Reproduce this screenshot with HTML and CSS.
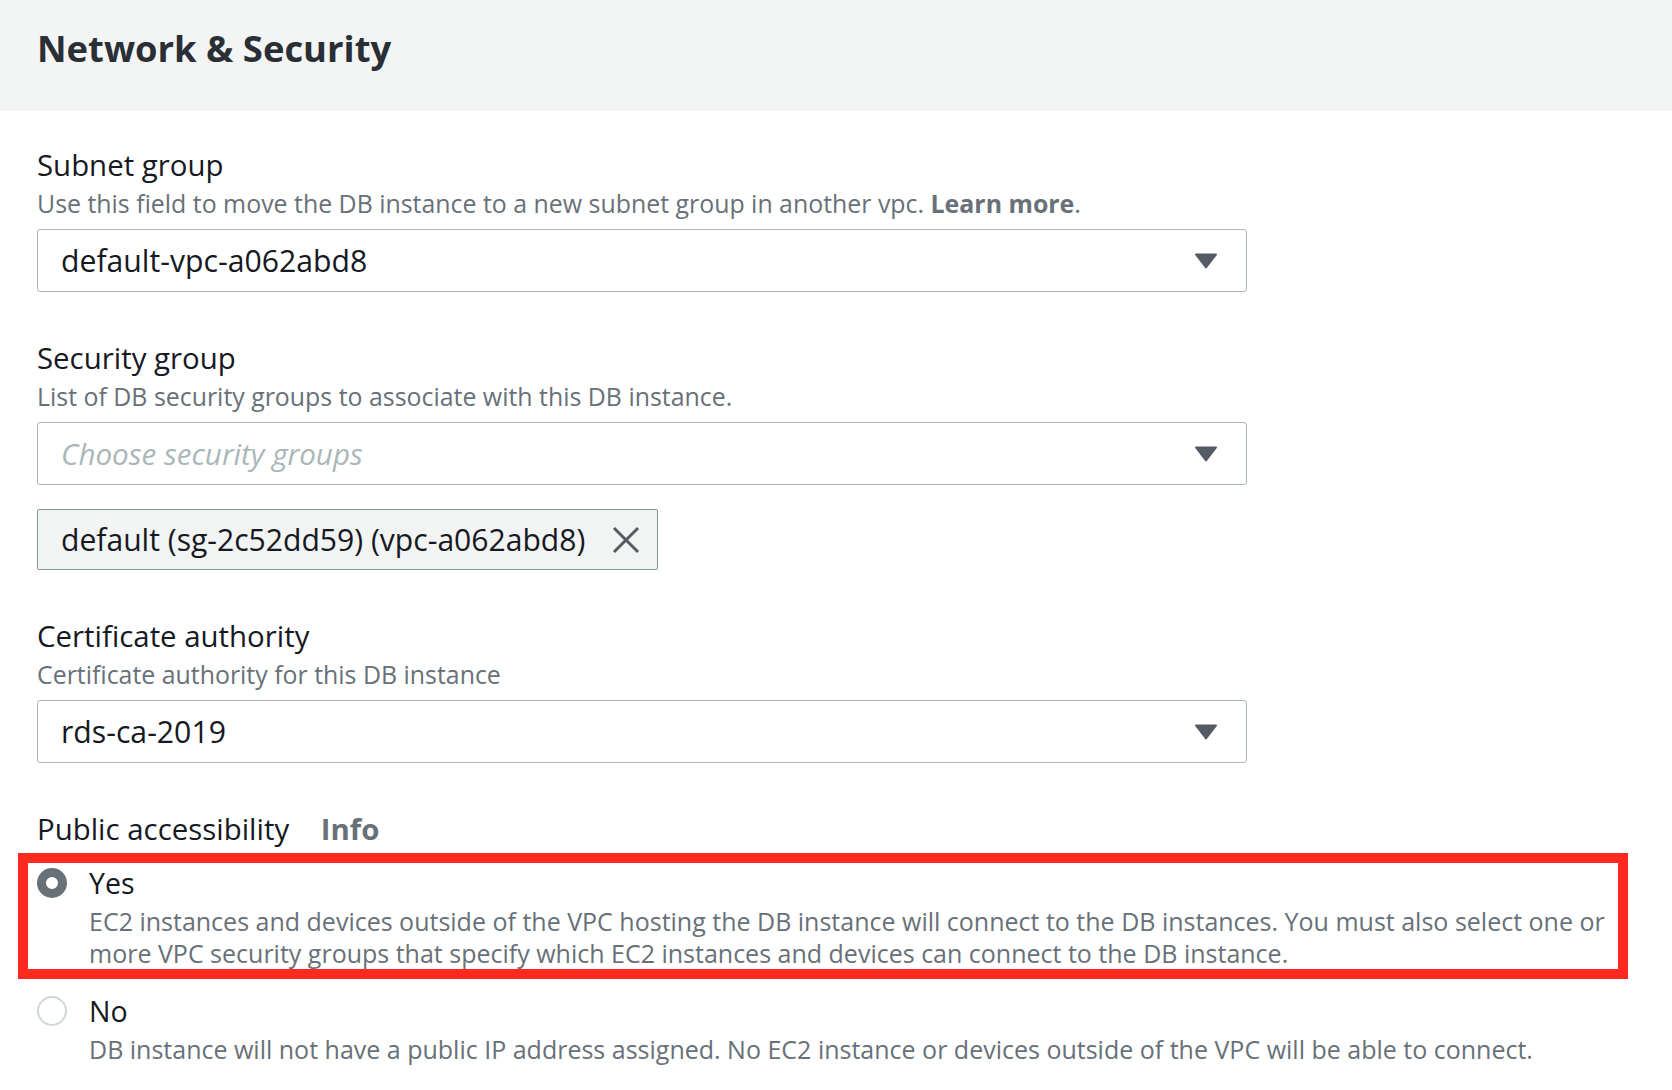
FILE: index.html
```html
<!DOCTYPE html>
<html lang="en">
<head>
<meta charset="utf-8">
<title>Network &amp; Security</title>
<link rel="stylesheet" href="styles.css">
</head>
<body>
<div class="panel">
  <header class="panel-header">
    <h2 class="panel-title">Network &amp; Security</h2>
  </header>
  <div class="panel-body">
    <div class="field">
      <div class="label">Subnet group</div>
      <div class="desc">Use this field to move the DB instance to a new subnet group in another vpc. <b class="link">Learn more</b>.</div>
      <div class="select">
        <span class="value">default-vpc-a062abd8</span>
        <svg class="caret" width="24" height="16" viewBox="0 0 24 16"><polygon points="2,1.5 22,1.5 12,14.5" fill="#545b64" stroke="#545b64" stroke-width="2" stroke-linejoin="round"/></svg>
      </div>
    </div>

    <div class="field">
      <div class="label">Security group</div>
      <div class="desc">List of DB security groups to associate with this DB instance.</div>
      <div class="select">
        <span class="value placeholder">Choose security groups</span>
        <svg class="caret" width="24" height="16" viewBox="0 0 24 16"><polygon points="2,1.5 22,1.5 12,14.5" fill="#545b64" stroke="#545b64" stroke-width="2" stroke-linejoin="round"/></svg>
      </div>
      <div class="token">
        <span class="token-text">default (sg-2c52dd59) (vpc-a062abd8)</span>
        <svg class="token-close" width="28" height="28" viewBox="0 0 28 28"><path d="M2 2 L26 26 M26 2 L2 26" stroke="#545b64" stroke-width="3" fill="none"/></svg>
      </div>
    </div>

    <div class="field">
      <div class="label">Certificate authority</div>
      <div class="desc">Certificate authority for this DB instance</div>
      <div class="select">
        <span class="value">rds-ca-2019</span>
        <svg class="caret" width="24" height="16" viewBox="0 0 24 16"><polygon points="2,1.5 22,1.5 12,14.5" fill="#545b64" stroke="#545b64" stroke-width="2" stroke-linejoin="round"/></svg>
      </div>
    </div>

    <div class="field">
      <div class="label">Public accessibility <span class="info">Info</span></div>
      <div class="radio-group">
        <div class="option highlight">
          <div class="option-row">
            <span class="radio checked"></span>
            <span class="option-label">Yes</span>
          </div>
          <div class="option-desc">EC2 instances and devices outside of the VPC hosting the DB instance will connect to the DB instances. You must also select one or<br>more VPC security groups that specify which EC2 instances and devices can connect to the DB instance.</div>
        </div>
        <div class="option">
          <div class="option-row">
            <span class="radio"></span>
            <span class="option-label">No</span>
          </div>
          <div class="option-desc">DB instance will not have a public IP address assigned. No EC2 instance or devices outside of the VPC will be able to connect.</div>
        </div>
      </div>
    </div>
  </div>
</div>
</body>
</html>
```

FILE: styles.css
```css
html, body {
  margin: 0;
  padding: 0;
  background: #ffffff;
}

body {
  font-family: "Open Sans", "Noto Sans", sans-serif;
  color: #16191f;
  overflow: hidden;
}

.panel-header {
  height: 110px;
  box-sizing: border-box;
  background: #f3f4f4;
  border-bottom: 1px solid #eaeded;
  padding: 28px 0 0 37px;
}

.panel-title {
  margin: 0;
  font-size: 36.4px;
  line-height: 40px;
  font-weight: 700;
  color: #2a2f36;
}

.panel-body {
  padding: 37px 0 0 37px;
}

.field + .field {
  margin-top: 48px;
}

.label {
  font-size: 29.4px;
  line-height: 36px;
  color: #16191f;
}

.info {
  margin-left: 24px;
  font-weight: 700;
  color: #687078;
}

.desc {
  margin-top: 5px;
  font-size: 24.9px;
  line-height: 30px;
  color: #687078;
}

.link {
  font-weight: 700;
  color: #687078;
}

.select {
  margin-top: 11px;
  width: 1210px;
  height: 63px;
  box-sizing: border-box;
  border: 1px solid #aab7b8;
  border-radius: 3px;
  display: flex;
  align-items: center;
  justify-content: space-between;
  padding: 0 28px 0 23px;
}

.value {
  font-size: 30.2px;
  color: #16191f;
}

.placeholder {
  font-size: 29.6px;
  font-style: italic;
  color: #aab7b8;
}

.caret {
  display: block;
}

.token {
  margin-top: 24px;
  width: fit-content;
  height: 61px;
  box-sizing: border-box;
  background: #f2f3f3;
  border: 1px solid #879596;
  border-radius: 2px;
  display: flex;
  align-items: center;
  padding: 0 17px 0 23px;
  gap: 27px;
}

.token-text {
  font-size: 30.1px;
  color: #16191f;
  white-space: nowrap;
}

.token-close {
  display: block;
  flex: none;
}

.radio-group {
  margin-top: 6px;
}

.option-row {
  display: flex;
  align-items: center;
  gap: 22px;
  height: 36px;
}

.option-label {
  font-size: 28.5px;
  line-height: 36px;
  color: #16191f;
}

.radio {
  width: 30px;
  height: 30px;
  box-sizing: border-box;
  border-radius: 50%;
  border: 2px solid #cfd6d6;
  background: #ffffff;
  flex: none;
}

.radio.checked {
  border: 9px solid #687078;
}

.option-desc {
  margin-top: 4px;
  padding-left: 52px;
  font-size: 25px;
  line-height: 32px;
  color: #687078;
  white-space: nowrap;
}

.option.highlight {
  margin-left: -19px;
  width: 1610px;
  box-sizing: border-box;
  border: 10px solid #ff2a1f;
  padding: 2px 0 0 9px;
}

.option + .option {
  margin-top: 14px;
}
```
